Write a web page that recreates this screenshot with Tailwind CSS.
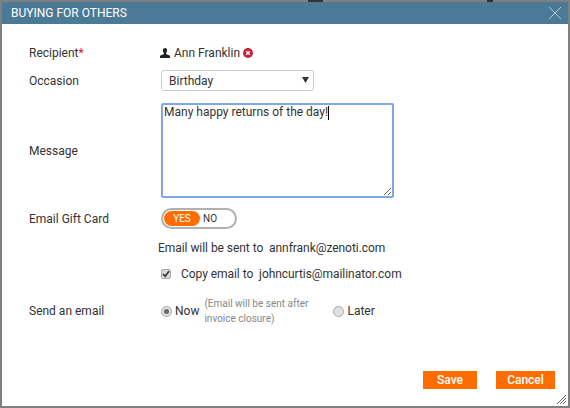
<!DOCTYPE html>
<html>

<head>
  <title>Buying for others</title>
  <meta charset="utf-8" />
  <script src="https://cdn.jsdelivr.net/npm/@tailwindcss/browser@4"></script>
</head>

<body class="bg-[#808080] font-['Roboto',sans-serif] text-[12px] text-[#333] overflow-hidden">
  <!-- bits of the page behind the dialog -->
  <span class="absolute left-[308px] top-0 w-[15px] h-[2px] bg-[#333]"></span>
  <span class="absolute left-[487px] top-0 w-[6px] h-[2px] bg-[#333]"></span>
  <div class="p-[2px] h-[408px] w-[570px]">
    <!-- dialog -->
    <div class="relative bg-white h-[404px] w-[566px]">
      <div class="h-[22px] bg-[#4b7a96] flex items-center justify-between pl-[9px] pr-[6px] text-white">
        <span>BUYING FOR OTHERS</span>
        <svg width="14" height="14" viewBox="0 0 14 14" fill="none" stroke="#b5c9d5" stroke-width="1">
          <path d="M1 1L13 13M13 1L1 13" />
        </svg>
      </div>

      <div class="pl-[27px]">
        <div class="flex items-center mt-[21px] h-[16px]">
          <div class="w-[132px]">Recipient<span class="text-[#e0103a]">*</span></div>
          <svg width="10" height="10" viewBox="0 0 10 10" fill="#222" class="ml-[-1px] mr-[4px]">
            <path d="M5 0C3.6 0 2.9 1 2.9 2.4C2.9 3.6 3.4 4.5 3.9 5V6L0.5 7.6C0.2 7.8 0 8 0 8.4V10H10V8.4C10 8 9.8 7.8 9.5 7.6L6.1 6V5C6.6 4.5 7.1 3.6 7.1 2.4C7.1 1 6.4 0 5 0Z" />
          </svg>
          <span>Ann Franklin</span>
          <svg width="10" height="10" viewBox="0 0 10 10" class="ml-[3px]">
            <circle cx="5" cy="5" r="5" fill="#c4213c" />
            <path d="M3.2 3.2L6.8 6.8M6.8 3.2L3.2 6.8" stroke="#fff" stroke-width="1.3" />
          </svg>
        </div>

        <div class="flex items-center mt-[9px] h-[21px]">
          <label class="w-[132px]">Occasion</label>
          <div class="relative">
            <select class="appearance-none w-[153px] h-[21px] pl-[7px] border border-[#ccc] rounded-[3px] bg-white text-[#333]">
              <option>Birthday</option>
            </select>
            <svg width="7" height="6" viewBox="0 0 7 6" fill="#333" class="absolute right-[5px] top-[7px]">
              <path d="M0 0H7L3.5 6Z" />
            </svg>
          </div>
        </div>

        <div class="flex items-center mt-[12px] h-[95px]">
          <label class="w-[132px]">Message</label>
          <div class="relative">
            <textarea class="block w-[233px] h-[95px] border-2 border-[#7fa6e8] rounded-[2px] px-[1px] py-0 leading-[14px] text-[#333] outline-none">Many happy returns of the day!</textarea>
            <span class="absolute left-[167px] top-[3px] w-px h-[14px] bg-black"></span>
          </div>
        </div>

        <div class="flex items-center mt-[10px] h-[21px]">
          <div class="w-[132px] pt-[1px]">Email Gift Card</div>
          <div class="flex items-center w-[76px] h-[21px] border-[2px] border-[#b0b0b0] rounded-full p-[1px] text-[10px]">
            <span class="w-[36px] h-[15px] bg-[#ff6d00] text-white rounded-full flex items-center justify-center">YES</span>
            <span class="ml-[3px]">NO</span>
          </div>
        </div>

        <div class="ml-[129px] mt-[11px] h-[16px] flex items-center tracking-[-0.05px]">Email will be sent to&nbsp; annfrank@zenoti.com</div>

        <div class="ml-[132px] mt-[10px] h-[16px] flex items-center tracking-[-0.05px]">
          <div class="w-[10px] h-[10px] bg-[#d8d8d8] border border-[#aaa] rounded-[2px] flex items-center justify-center">
            <svg width="8" height="8" viewBox="0 0 8 8" fill="none" stroke="#333" stroke-width="1.6">
              <path d="M1 4L3.2 6.2L7 1.2" />
            </svg>
          </div>
          <span class="ml-[10px]">Copy email to&nbsp; johncurtis@mailinator.com</span>
        </div>

        <div class="flex items-center mt-[17px] h-[24px]">
          <div class="w-[132px]">Send an email</div>
          <div class="w-[11px] h-[11px] rounded-full bg-[#e0e0e0] border border-[#aaa] flex items-center justify-center">
            <span class="w-[5px] h-[5px] rounded-full bg-[#666]"></span>
          </div>
          <span class="ml-[3px]">Now</span>
          <span class="ml-[5px] w-[115px] text-[10px] leading-[15px] text-[#888]">(Email will be sent after invoice closure)</span>
          <div class="ml-[14px] w-[11px] h-[11px] rounded-full bg-[#e0e0e0] border border-[#aaa]"></div>
          <span class="ml-[3px]">Later</span>
        </div>
      </div>

      <div class="absolute right-[13px] bottom-[17px] flex gap-[19px] text-white font-medium">
        <button class="w-[54px] h-[18px] bg-[#ff6d00]">Save</button>
        <button class="w-[59px] h-[18px] bg-[#ff6d00]">Cancel</button>
      </div>

      <svg width="11" height="11" viewBox="0 0 11 11" stroke="#666" stroke-width="1" class="absolute right-[1px] bottom-[1px]">
        <path d="M1 10L10 1M4 10L10 4M7 10L10 7" />
      </svg>
    </div>
  </div>
</body>

</html>
